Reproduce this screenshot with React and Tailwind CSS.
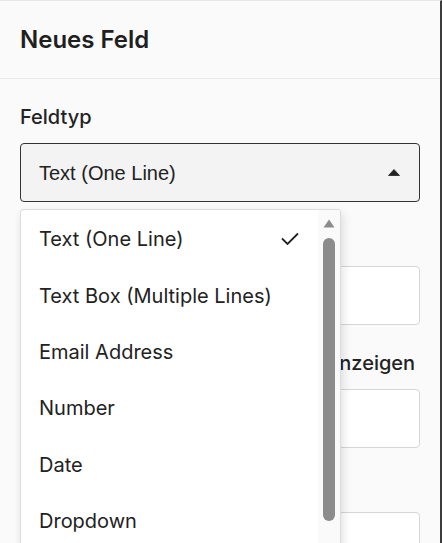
import React from "react";

const items = [
  "Text (One Line)",
  "Text Box (Multiple Lines)",
  "Email Address",
  "Number",
  "Date",
  "Dropdown",
  "Checkbox",
];

export default function App() {
  return (
    <div className="w-[442px] h-[543px] overflow-hidden bg-[#fafafa] font-['Inter',sans-serif] text-[#222]">
      <div className="relative w-[442px] h-[543px] border-t border-[#e6e6e6] border-r-2 border-r-[#3c3c3c]">
        <div className="px-5 pt-[23px] pb-[22px] border-b border-[#e8e8e8]">
          <h1 className="text-[24px] leading-[32px] font-semibold text-[#1f1f1f]">Neues Feld</h1>
        </div>
        <div className="pl-5 pr-[20px] pt-6 flex flex-col">
          <div className="flex flex-col gap-3">
            <label className="text-[20px] leading-[28px] font-medium">Feldtyp</label>
            <div className="relative">
              <div className="h-[59px] rounded-[4px] border border-[#333] bg-[#f3f3f3] flex items-center justify-between pl-[18px] pr-[18px]">
                <span className="font-['Liberation_Sans',Arial,sans-serif] text-[20px] text-[#222]">Text (One Line)</span>
                <svg width="12" height="7" viewBox="0 0 12 7" className="mr-[1px]">
                  <path d="M6 0.5 L11.5 6.5 L0.5 6.5 Z" fill="#222" stroke="#222" strokeWidth="0.8" strokeLinejoin="round" />
                </svg>
              </div>
              <div className="absolute left-0 top-[66px] z-10 w-[321px] h-[420px] overflow-hidden bg-white border border-[#dcdcdc] rounded-[3px] shadow-[2px_4px_10px_rgba(0,0,0,0.12)] flex">
                <div className="flex-1 pt-[1px]">
                  {items.map((it, i) => (
                    <div key={it} className="h-[56.4px] flex items-center justify-between pl-[18px] pr-[18px]">
                      <span className="text-[20px] text-[#222]">{it}</span>
                      {i === 0 && (
                        <svg width="20" height="16" viewBox="0 0 20 16">
                          <polyline points="2,7.5 7.5,13 18,2.5" fill="none" stroke="#222" strokeWidth="1.8" />
                        </svg>
                      )}
                    </div>
                  ))}
                </div>
                <div className="w-[22px] bg-[#fafafa] flex flex-col items-center pt-[9px]">
                  <svg width="12" height="9" viewBox="0 0 12 9">
                    <path d="M6 0.5 L11.5 8.5 L0.5 8.5 Z" fill="#8c8c8c" />
                  </svg>
                  <div className="mt-[10px] w-[12px] h-[283px] rounded-full bg-[#8c8c8c]" />
                </div>
              </div>
            </div>
          </div>

          <div className="flex flex-col gap-3 mt-6">
            <label className="text-[20px] leading-[28px] font-medium">Feldname</label>
            <div className="h-[59px] rounded-[4px] border border-[#d6d6d6] bg-white" />
          </div>

          <div className="flex flex-col gap-3 mt-6">
            <label className="text-[20px] leading-[28px] font-medium whitespace-nowrap">Beschreibung stets im Formular anzeigen</label>
            <div className="h-[59px] rounded-[4px] border border-[#d6d6d6] bg-white" />
          </div>

          <div className="flex flex-col gap-3 mt-6">
            <label className="text-[20px] leading-[28px] font-medium">Platzhalter</label>
            <div className="h-[59px] rounded-[4px] border border-[#d6d6d6] bg-white" />
          </div>
        </div>
      </div>
    </div>
  );
}
